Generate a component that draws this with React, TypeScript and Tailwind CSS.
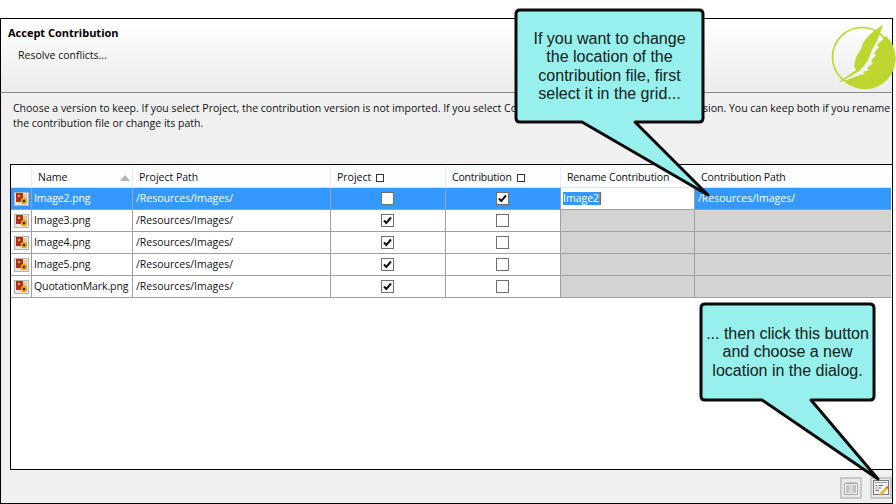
const rows = [
  { name: "Image2.png", project: false, contribution: true, selected: true },
  { name: "Image3.png", project: true, contribution: false },
  { name: "Image4.png", project: true, contribution: false },
  { name: "Image5.png", project: true, contribution: false },
  { name: "QuotationMark.png", project: true, contribution: false },
];

const columns = "grid grid-cols-[21px_101px_198px_115px_115px_134px_196px]";

function FileIcon() {
  return (
    <div className="w-[15px] h-[14px] border border-[#b4b4b4] bg-[#e9e6dc] flex items-center justify-center">
      <svg width="13" height="12" viewBox="0 0 13 12">
        <rect x="1" y="0" width="7" height="9" fill="#b5301c" />
        <rect x="8" y="1" width="4" height="5" fill="#d8cfa8" />
        <rect x="3" y="2" width="2" height="2" fill="#f2c040" />
        <circle cx="9" cy="8" r="3.2" fill="#e8a010" />
        <circle cx="9" cy="8" r="1.2" fill="#2a2010" />
      </svg>
    </div>
  );
}

function CheckBox({ checked }: { checked: boolean }) {
  return (
    <div className="w-[13px] h-[13px] -ml-[1px] border border-[#707070] bg-white flex items-center justify-center">
      {checked && (
        <svg width="9" height="9" viewBox="0 0 9 9">
          <path d="M1 4.5 L3.3 7 L8 1.5" fill="none" stroke="#111" strokeWidth="2" />
        </svg>
      )}
    </div>
  );
}

function HeaderCell({ label, box, className }: { label: string; box?: boolean; className?: string }) {
  return (
    <div className={"h-[21px] pt-[2px] flex items-center border-r border-[#e3ecf8] " + (className ?? "")}>
      <span>{label}</span>
      {box && <span className="ml-[5px] w-[8px] h-[8px] border border-[#333]" />}
    </div>
  );
}

function Grid() {
  return (
    <div className="ml-[9px] flex-1 border border-black border-r-0 bg-white relative">
      <div className={columns + " bg-[#fcfdfe] border-b border-[#dfe3ea] border-t border-t-white"}>
        <HeaderCell label="" />
        <HeaderCell label="Name" className="pl-[6px]" />
        <HeaderCell label="Project Path" className="pl-[6px]" />
        <HeaderCell label="Project" box className="pl-[6px]" />
        <HeaderCell label="Contribution" box className="pl-[6px] tracking-[-0.2px]" />
        <HeaderCell label="Rename Contribution" className="pl-[6px] tracking-[-0.15px]" />
        <HeaderCell label="Contribution Path" className="pl-[6px] border-r-0 tracking-[-0.15px]" />
      </div>
      {rows.map((row) => {
        const fg = row.selected ? "bg-[#3399ff] text-white" : "bg-white";
        const line = "border-r border-b border-[#a0a0a0] h-[22px] flex items-center";
        const last = "border-b border-[#a0a0a0] h-[22px] flex items-center";
        return (
          <div key={row.name} className={columns}>
            <div className={line + " justify-center " + fg}>
              <FileIcon />
            </div>
            <div className={line + " pl-[2px] tracking-[-0.1px] " + fg}>{row.name}</div>
            <div className={line + " pl-[3px] " + fg}>/Resources/Images/</div>
            <div className={line + " justify-center " + fg}>
              <CheckBox checked={row.project} />
            </div>
            <div className={line + " justify-center " + fg}>
              <CheckBox checked={row.contribution} />
            </div>
            {row.selected ? (
              <div className={line + " bg-white pl-[2px]"}>
                <span className="bg-[#3399ff] text-white border-r border-[#d05000] leading-[13px] pr-[1px]">Image2</span>
              </div>
            ) : (
              <div className={line + " bg-[#d3d3d3]"} />
            )}
            {row.selected ? (
              <div className={last + " pl-[3px] " + fg}>/Resources/Images/</div>
            ) : (
              <div className={last + " bg-[#d3d3d3]"} />
            )}
          </div>
        );
      })}
      <svg className="absolute left-[109px] top-[10px]" width="10" height="6" viewBox="0 0 10 6">
        <path d="M0 6 L5 0 L10 6 Z" fill="#b4b4b4" />
      </svg>
    </div>
  );
}

function Logo() {
  return (
    <svg className="overflow-visible" width="64" height="64" viewBox="0 0 64 64">
      <circle cx="32" cy="32" r="29.5" fill="none" stroke="#bfd630" strokeWidth="1.6" />
      <path
        d="M56 11 A30 30 0 0 1 14 56 L30 50 L35 49 L33 47 L39 45 L37 43 L43 38 L41 36 L46 30 L44 28 L49 22 L47 20 Z"
        fill="#bfd630"
      />
      <path
        d="M53 0 C46 4 38 10 33 18 L31 24 L26 32 L24 41 L26 45 L9 57 L11 57 L29 46 L34 41 L38 35 L42 25 L47 16 Z"
        fill="#bfd630"
      />
    </svg>
  );
}

function ToolButton({ children }: { children: React.ReactNode }) {
  return (
    <div className="w-[22px] h-[22px] border-2 border-[#c8c8c8] bg-[#e9e9e9] flex items-center justify-center">
      {children}
    </div>
  );
}

function Callout({
  width,
  height,
  tail,
  className,
  lines,
  textClass,
}: {
  width: number;
  height: number;
  tail: string;
  className: string;
  lines: string[];
  textClass: string;
}) {
  return (
    <div className={"absolute " + className}>
      <svg className="absolute left-0 top-0 overflow-visible" width={width} height={height}>
        <path d={tail} fill="#97f0eb" stroke="#0a0a0a" strokeWidth="3" strokeLinejoin="round" />
      </svg>
      <div className={"relative w-full h-full text-center text-[16px] leading-[18.3px] text-[#10201c] font-['Liberation_Sans',sans-serif] " + textClass}>
        {lines.map((l) => (
          <div key={l}>{l}</div>
        ))}
      </div>
    </div>
  );
}

export default function App() {
  return (
    <div className="relative w-[896px] h-[504px] bg-white pt-[18px] overflow-hidden font-['Open_Sans',sans-serif] text-[10.5px] text-[#111]">
      <div className="w-[893px] h-[486px] border border-black flex flex-col bg-[#f0f0f0]">
        <div className="h-[74px] shrink-0 border-b border-[#8a8a8a] bg-gradient-to-b from-white to-[#ececec] relative">
          <div className="pl-[7px] pt-[6px] text-[11px] font-bold text-black">Accept Contribution</div>
          <div className="pl-[17px] pt-[6px]">Resolve conflicts...</div>
          <div className="absolute left-[829px] top-[6px]">
            <Logo />
          </div>
        </div>
        <div className="h-[71px] shrink-0 pl-[12px] pt-[8px] leading-[15px] whitespace-nowrap">
          Choose a version to keep. If you select Project, the contribution version is not imported. If you select Contribution, it replaces the project's version. You can keep both if you rename
          <br />
          the contribution file or change its path.
        </div>
        <Grid />
        <div className="h-[33px] shrink-0 flex items-start justify-end gap-[8px] pt-[7px]">
          <ToolButton>
            <svg width="16" height="14" viewBox="0 0 16 14">
              <path d="M2.5 1.5 H13.5" stroke="#c4c4c4" />
              <path d="M1.5 2.5 H14.5 V13.5 H1.5 Z" fill="#f6f6f6" stroke="#a6a6a6" />
              <path d="M8 3 V13" stroke="#b8b8b8" />
              <path d="M3 5 H6.5 M3 7 H6.5 M3 9 H6.5 M3 11 H6.5 M9.5 5 H13 M9.5 7 H13 M9.5 9 H13 M9.5 11 H13" stroke="#8e8e8e" />
            </svg>
          </ToolButton>
          <ToolButton>
            <svg width="18" height="18" viewBox="0 0 18 18">
              <rect x="1.5" y="1.5" width="15" height="14" fill="#f4f4f4" stroke="#7a7a7a" />
              <path d="M3 3.5 H15" stroke="#9a9a9a" />
              <path d="M3.5 6.5 H5 M3.5 9 H5" stroke="#c03030" />
              <path d="M6.5 6.5 H11 M6.5 9 H9 M3.5 11.5 H7" stroke="#5070a8" />
              <path d="M8 16 L15 8.5" stroke="#e6b020" strokeWidth="2.5" />
              <path d="M14.5 7.5 L16.5 9.5" stroke="#d05050" strokeWidth="1.5" />
            </svg>
          </ToolButton>
        </div>
      </div>

      <Callout
        className="left-[516px] top-[10px] w-[187px] h-[112px]"
        textClass="pt-[20px]"
        width={187}
        height={112}
        lines={["If you want to change", "the location of the", "contribution file, first", "select it in the grid..."]}
        tail="M4 0 H183 Q187 0 187 4 V108 Q187 112 183 112 H119 L192 185 L66 112 H4 Q0 112 0 108 V4 Q0 0 4 0 Z"
      />
      <Callout
        className="left-[701px] top-[304px] w-[173px] h-[96px]"
        textClass="pt-[21px]"
        width={173}
        height={96}
        lines={["... then click this button", "and choose a new", "location in the dialog."]}
        tail="M4 0 H169 Q173 0 173 4 V92 Q173 96 169 96 H110 L177 175 L61 96 H4 Q0 96 0 92 V4 Q0 0 4 0 Z"
      />
    </div>
  );
}
